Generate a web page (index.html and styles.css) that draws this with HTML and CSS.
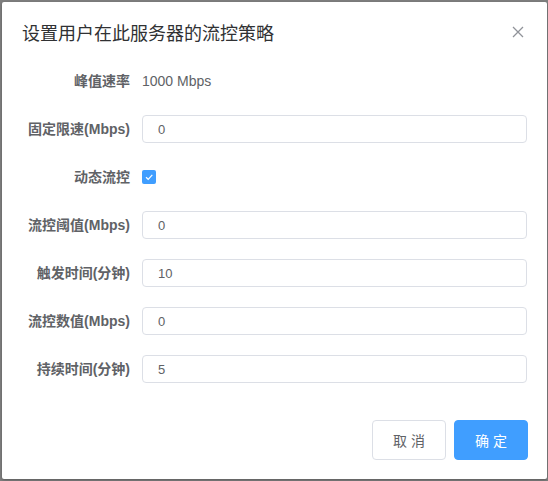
FILE: index.html
```html
<!DOCTYPE html>
<html lang="zh-CN">
<head>
<meta charset="utf-8">
<title>流控策略</title>
<link rel="stylesheet" href="styles.css">
</head>
<body>
<div class="dialog">
  <div class="dialog-header">
    <span class="dialog-title">设置用户在此服务器的流控策略</span>
    <button class="dialog-close" aria-label="关闭">
      <svg width="12" height="12" viewBox="0 0 12 12"><path d="M1 1 L11 11 M11 1 L1 11" stroke="#909399" stroke-width="1.3" fill="none"/></svg>
    </button>
  </div>
  <div class="dialog-body">
    <form class="form">
      <div class="form-item">
        <label class="form-label">峰值速率</label>
        <div class="form-content"><span class="plain-value">1000 Mbps</span></div>
      </div>
      <div class="form-item">
        <label class="form-label">固定限速(Mbps)</label>
        <div class="form-content"><input class="input" type="text" value="0"></div>
      </div>
      <div class="form-item">
        <label class="form-label">动态流控</label>
        <div class="form-content">
          <span class="checkbox">
            <svg width="14" height="14" viewBox="0 0 14 14"><path d="M4 7.2 L6.2 9.3 L10.3 4.8" stroke="#fff" stroke-width="1.2" fill="none"/></svg>
          </span>
        </div>
      </div>
      <div class="form-item">
        <label class="form-label">流控阈值(Mbps)</label>
        <div class="form-content"><input class="input" type="text" value="0"></div>
      </div>
      <div class="form-item">
        <label class="form-label">触发时间(分钟)</label>
        <div class="form-content"><input class="input" type="text" value="10"></div>
      </div>
      <div class="form-item">
        <label class="form-label">流控数值(Mbps)</label>
        <div class="form-content"><input class="input" type="text" value="0"></div>
      </div>
      <div class="form-item">
        <label class="form-label">持续时间(分钟)</label>
        <div class="form-content"><input class="input" type="text" value="5"></div>
      </div>
    </form>
  </div>
  <div class="dialog-footer">
    <button class="btn">取 消</button>
    <button class="btn btn-primary">确 定</button>
  </div>
</div>
</body>
</html>
```

FILE: styles.css
```css
html, body {
  margin: 0;
  padding: 0;
}
body {
  width: 548px;
  height: 481px;
  overflow: hidden;
  background: #7f7f7f;
  font-family: "Liberation Sans", "Noto Sans CJK SC", sans-serif;
  padding: 2px 1px 2px 2px;
  box-sizing: border-box;
}
.dialog {
  width: 545px;
  height: 477px;
  background: #fff;
  border-radius: 2px;
  box-shadow: 0 1px 3px rgba(0,0,0,.3);
  display: flex;
  flex-direction: column;
  box-sizing: border-box;
}
.dialog-header {
  position: relative;
  padding: 20px 20px 10px;
}
.dialog-title {
  display: block;
  font-size: 18px;
  line-height: 24px;
  color: #303133;
}
.dialog-close {
  position: absolute;
  top: 22px;
  right: 21px;
  width: 16px;
  height: 16px;
  padding: 2px;
  border: 0;
  background: transparent;
  display: flex;
  align-items: center;
  justify-content: center;
}
.dialog-body {
  padding: 11px 20px 0;
  flex: 1;
}
.form {
  display: flex;
  flex-direction: column;
  gap: 20px;
}
.form-item {
  display: flex;
  align-items: center;
  height: 28px;
}
.form-label {
  width: 120px;
  padding-right: 12px;
  box-sizing: border-box;
  text-align: right;
  font-size: 14px;
  font-weight: bold;
  color: #606266;
  line-height: 28px;
  white-space: nowrap;
}
.form-content {
  flex: 1;
  display: flex;
  align-items: center;
}
.plain-value {
  font-size: 14px;
  color: #606266;
}
.input {
  width: 100%;
  height: 28px;
  box-sizing: border-box;
  border: 1px solid #dcdfe6;
  border-radius: 4px;
  padding: 0 15px;
  font-family: "Liberation Sans", "Noto Sans CJK SC", sans-serif;
  font-size: 13px;
  color: #606266;
  outline: none;
  background: #fff;
}
.checkbox {
  width: 14px;
  height: 14px;
  background: #409eff;
  border-radius: 2px;
  display: flex;
}
.dialog-footer {
  display: flex;
  justify-content: flex-end;
  gap: 8px;
  padding: 0 19px 19px 20px;
}
.btn {
  height: 40px;
  width: 74px;
  box-sizing: border-box;
  border: 1px solid #dcdfe6;
  border-radius: 4px;
  background: #fff;
  color: #606266;
  font-family: "Liberation Sans", "Noto Sans CJK SC", sans-serif;
  font-size: 14px;
  padding: 0;
}
.btn-primary {
  background: #409eff;
  border-color: #409eff;
  color: #fff;
}
```
